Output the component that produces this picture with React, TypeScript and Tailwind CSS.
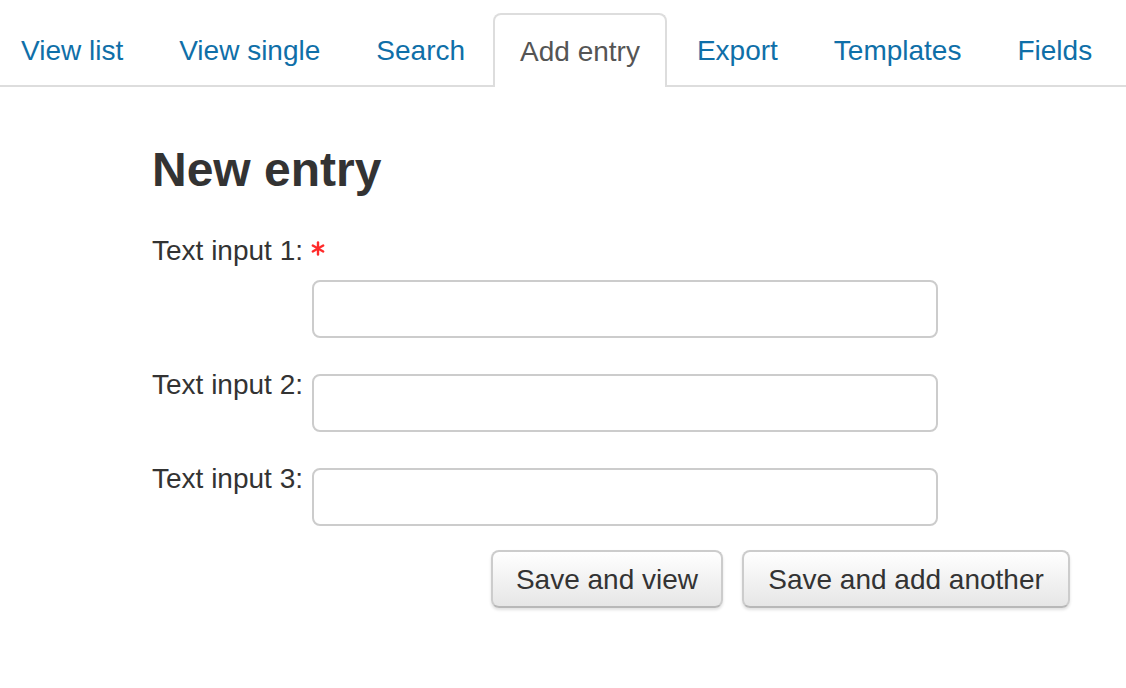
import React from "react";

const tabs = ["View list", "View single", "Search", "Add entry", "Export", "Templates", "Fields"];
const activeTab = "Add entry";

const RequiredMark: React.FC = () => (
  <svg width="14" height="15" viewBox="0 0 14 15" className="ml-[8px] -mt-[4px]">
    <g stroke="#ff2a2a" strokeWidth="2.4" strokeLinecap="round">
      <line x1="7" y1="1.5" x2="7" y2="13.5" />
      <line x1="1.8" y1="4.5" x2="12.2" y2="10.5" />
      <line x1="1.8" y1="10.5" x2="12.2" y2="4.5" />
    </g>
  </svg>
);

const TextInput: React.FC = () => (
  <input
    type="text"
    className="w-[626px] h-[58px] border-2 border-[#cccccc] rounded-[8px] bg-white px-3 outline-none"
  />
);

const App: React.FC = () => {
  return (
    <div className="w-full min-h-[688px] bg-white text-[#333333] font-['Liberation_Sans',Arial,sans-serif]">
      {/* tab bar */}
      <div className="pt-[13px]">
        <ul className="flex border-b-2 border-[#dddddd] -ml-[5px]">
          {tabs.map((tab) =>
            tab === activeTab ? (
              <li key={tab} className="-ml-[2px] mr-[4px] -mb-[2px]">
                <span className="flex items-center h-[74px] pt-[2px] px-[25px] border-2 border-b-0 border-[#dddddd] rounded-t-[8px] bg-white text-[28px] text-[#555555]">
                  {tab}
                </span>
              </li>
            ) : (
              <li key={tab} className="mr-[4px] -mb-[2px]">
                <a href="#" className="flex items-center h-[74px] pt-[2px] px-[26px] text-[28px] text-[#0f6fa8]">
                  {tab}
                </a>
              </li>
            )
          )}
        </ul>
      </div>

      <div className="pl-[152px]">
        <h2 className="mt-[56px] text-[48px] leading-[53px] font-bold text-[#333333]">New entry</h2>

        {/* row 1: label overflows, input drops below */}
        <div className="mt-[33px]">
          <div className="flex items-center h-[40px] pt-[3px] text-[28px] leading-[40px]">
            <label>Text input 1:</label>
            <RequiredMark />
          </div>
          <div className="mt-[11px] pl-[160px]">
            <TextInput />
          </div>
        </div>

        {["Text input 2:", "Text input 3:"].map((label) => (
          <div key={label} className="flex items-start mt-[24px]">
            <label className="w-[160px] pt-[3px] text-[28px] leading-[40px]">{label}</label>
            <div className="mt-[12px]">
              <TextInput />
            </div>
          </div>
        ))}

        <div className="flex gap-[19px] mt-[24px] pl-[339px]">
          <button className="w-[232px] h-[58px] pt-[2px] rounded-[8px] border-2 border-[#cccccc] border-b-[#b8b8b8] bg-gradient-to-b from-white to-[#e6e6e6] shadow-[0_2px_3px_rgba(0,0,0,0.12)] text-[28px] text-[#333333]">
            Save and view
          </button>
          <button className="w-[328px] h-[58px] pt-[2px] rounded-[8px] border-2 border-[#cccccc] border-b-[#b8b8b8] bg-gradient-to-b from-white to-[#e6e6e6] shadow-[0_2px_3px_rgba(0,0,0,0.12)] text-[28px] text-[#333333]">
            Save and add another
          </button>
        </div>
      </div>
    </div>
  );
};

export default App;
